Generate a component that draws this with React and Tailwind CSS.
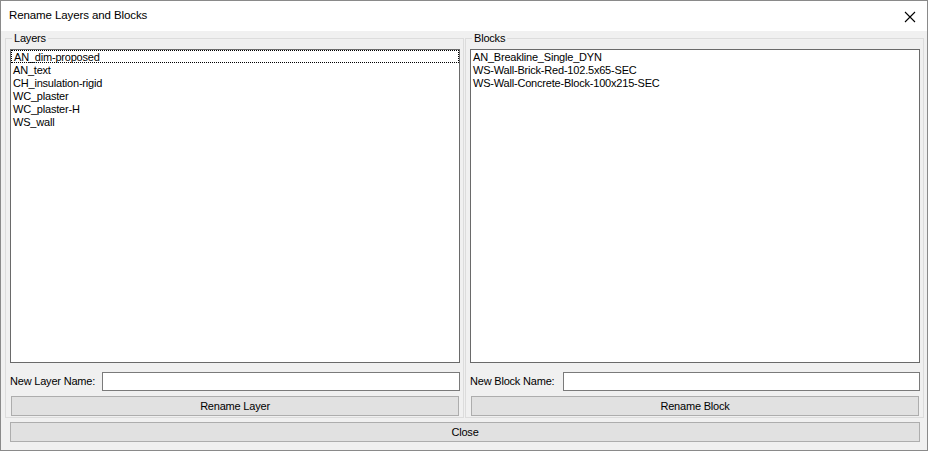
import React from "react";

const layers = ["AN_dim-proposed", "AN_text", "CH_insulation-rigid", "WC_plaster", "WC_plaster-H", "WS_wall"];
const blocks = ["AN_Breakline_Single_DYN", "WS-Wall-Brick-Red-102.5x65-SEC", "WS-Wall-Concrete-Block-100x215-SEC"];

function Group({ title, items, label, labelW, button, focusFirst }) {
  return (
    <fieldset className="m-0 w-[459px] border border-[#dcdcdc] pl-[4px] pr-[3px] pb-[1px] pt-0 min-w-0">
      <legend className="ml-[2px] px-[2px] text-[11px] leading-[14px] tracking-[-0.2px] text-black">{title}</legend>
      <div className="mt-[4px] h-[314px] w-[450px] border border-[#6a6a6a] bg-white pt-0">
        {items.map((t, i) => (
          <div
            key={t}
            className={
              "h-[13px] pl-[2px] text-[11px] tracking-[-0.2px] text-black whitespace-nowrap " +
              (i === 0 && focusFirst
                ? "border border-dotted border-black pl-[1px] pt-0 leading-[12px]"
                : "pt-[1px] leading-[12px]")
            }
          >
            {t}
          </div>
        ))}
      </div>
      <div className="mt-[9px] flex items-center">
        <div className={"text-[11px] leading-[13px] tracking-[-0.2px] text-black " + labelW}>{label}</div>
        <div className="h-[19px] flex-1 border border-[#7a7a7a] bg-white" />
      </div>
      <div className="mt-[5px] flex h-[20px] w-[448px] ml-[1px] items-center justify-center border border-[#adadad] bg-[#e1e1e1] text-[11px] tracking-[-0.2px] text-black">
        {button}
      </div>
    </fieldset>
  );
}

export default function App() {
  return (
    <div className="h-[451px] w-[928px] overflow-hidden border border-[#8a8a8a] bg-[#f0f0f0] font-['Liberation_Sans',Arial,sans-serif]">
      <div className="flex h-[30px] items-center justify-between bg-white pl-[8px] pr-[10px]">
        <span className="text-[11.5px] tracking-[-0.1px] text-black">Rename Layers and Blocks</span>
        <svg width="12" height="12" viewBox="0 0 12 12" className="mr-[1px] mt-[1px]">
          <path d="M1 1 L11 11 M11 1 L1 11" stroke="#000" strokeWidth="1.1" fill="none" />
        </svg>
      </div>
      <div className="flex gap-[1px] pl-[4px] pt-0">
        <Group title="Layers" items={layers} label="New Layer Name:" labelW="w-[92px]" button="Rename Layer" focusFirst />
        <Group title="Blocks" items={blocks} label="New Block Name:" labelW="w-[93px]" button="Rename Block" />
      </div>
      <div className="ml-[9px] mt-[4px] flex h-[20px] w-[910px] items-center justify-center border border-[#adadad] bg-[#e1e1e1] text-[11px] tracking-[-0.2px] text-black">
        Close
      </div>
    </div>
  );
}
